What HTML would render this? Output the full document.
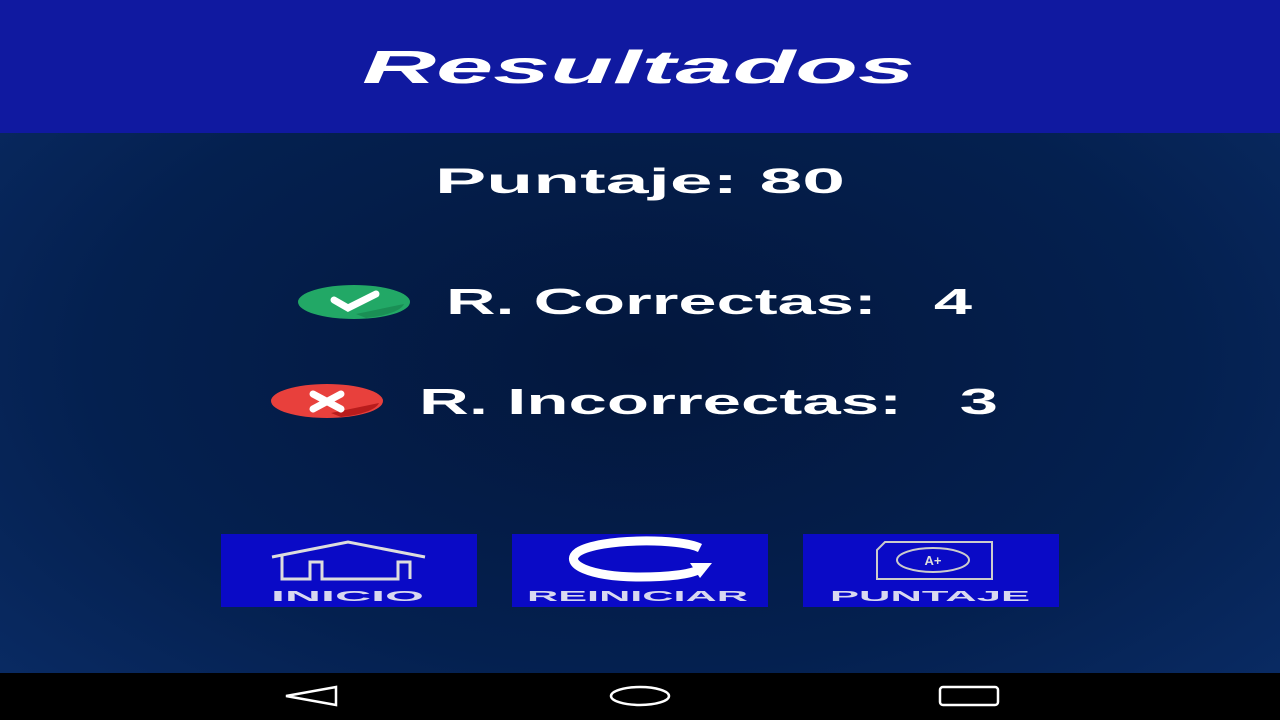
<!DOCTYPE html>
<html><head><meta charset="utf-8"><style>
*{margin:0;padding:0;box-sizing:border-box}
body{width:1280px;height:720px;overflow:hidden;position:relative;font-family:"Liberation Sans",sans-serif;
background:radial-gradient(ellipse at 50% 50%,#03173d 0%,#04204f 60%,#0a2c66 100%);}
svg.full{position:absolute;left:0;top:0}
</style></head><body>
<svg class="full" width="1280" height="720" viewBox="0 0 1280 720" font-family="Liberation Sans" font-weight="bold">
<rect x="0" y="0" width="1280" height="133" fill="#1019a0"/>
<text x="362" y="83" font-size="46" font-style="italic" fill="#fff" textLength="553" lengthAdjust="spacingAndGlyphs">Resultados</text>
<text x="435" y="193" font-size="35" fill="#fff" textLength="410" lengthAdjust="spacingAndGlyphs">Puntaje: 80</text>
<text x="446" y="314" font-size="36" fill="#fff" textLength="526" lengthAdjust="spacingAndGlyphs" xml:space="preserve">R. Correctas:   4</text>
<text x="419" y="414" font-size="36" fill="#fff" textLength="579" lengthAdjust="spacingAndGlyphs" xml:space="preserve">R. Incorrectas:   3</text>

<g transform="translate(296,284)">
<ellipse cx="58" cy="18" rx="56" ry="17" fill="#22a866"/>
<path d="M60 30 L108 20 A56 17 0 0 1 70 34Z" fill="#1a8f55"/>
<path d="M38 16 L52 24 L80 10" stroke="#fff" stroke-width="7" fill="none" stroke-linecap="round"/>
</g>
<g transform="translate(269,383)">
<ellipse cx="58" cy="18" rx="56" ry="17" fill="#e8403c"/>
<path d="M62 30 L110 20 A56 17 0 0 1 72 34Z" fill="#b81c1c"/>
<path d="M44 11 L72 26 M72 11 L44 26" stroke="#fff" stroke-width="7" stroke-linecap="round"/>
</g>

<rect x="221" y="534" width="256" height="73" fill="#0a0ac6"/>
<rect x="512" y="534" width="256" height="73" fill="#0a0ac6"/>
<rect x="803" y="534" width="256" height="73" fill="#0a0ac6"/>

<path d="M272 557 L348 542 L425 557" stroke="#ddd" stroke-width="3" fill="none"/>
<path d="M282 555 V579 H310 V562 H322 V579 H398 V562 H410 V579" stroke="#ddd" stroke-width="3" fill="none"/>

<path d="M700 548 C680 538 600 538 578 552 C562 564 590 577 640 577 C670 577 690 574 698 570" stroke="#fff" stroke-width="9" fill="none"/>
<path d="M690 563 L712 563 L700 578Z" fill="#fff"/>

<path d="M885 542 H992 V579 H877 V550 Z" stroke="#ccc" stroke-width="2" fill="none"/>
<ellipse cx="933" cy="560" rx="36" ry="12" stroke="#ccc" stroke-width="2" fill="none"/>
<text x="933" y="565" fill="#ddd" font-size="13" text-anchor="middle">A+</text>

<text x="271" y="601" font-size="15" fill="#d8d8f0" textLength="153" lengthAdjust="spacingAndGlyphs">INICIO</text>
<text x="527" y="601" font-size="15" fill="#d8d8f0" textLength="221" lengthAdjust="spacingAndGlyphs">REINICIAR</text>
<text x="830" y="601" font-size="15" fill="#d8d8f0" textLength="200" lengthAdjust="spacingAndGlyphs">PUNTAJE</text>

<rect x="0" y="673" width="1280" height="47" fill="#000"/>
<path d="M286 696 L336 687 V705 Z" stroke="#fff" stroke-width="2.5" fill="none"/>
<ellipse cx="640" cy="696" rx="29" ry="9" stroke="#fff" stroke-width="2.5" fill="none"/>
<rect x="940" y="687" width="58" height="18" rx="3" stroke="#fff" stroke-width="2.5" fill="none"/>
</svg>
</body></html>
